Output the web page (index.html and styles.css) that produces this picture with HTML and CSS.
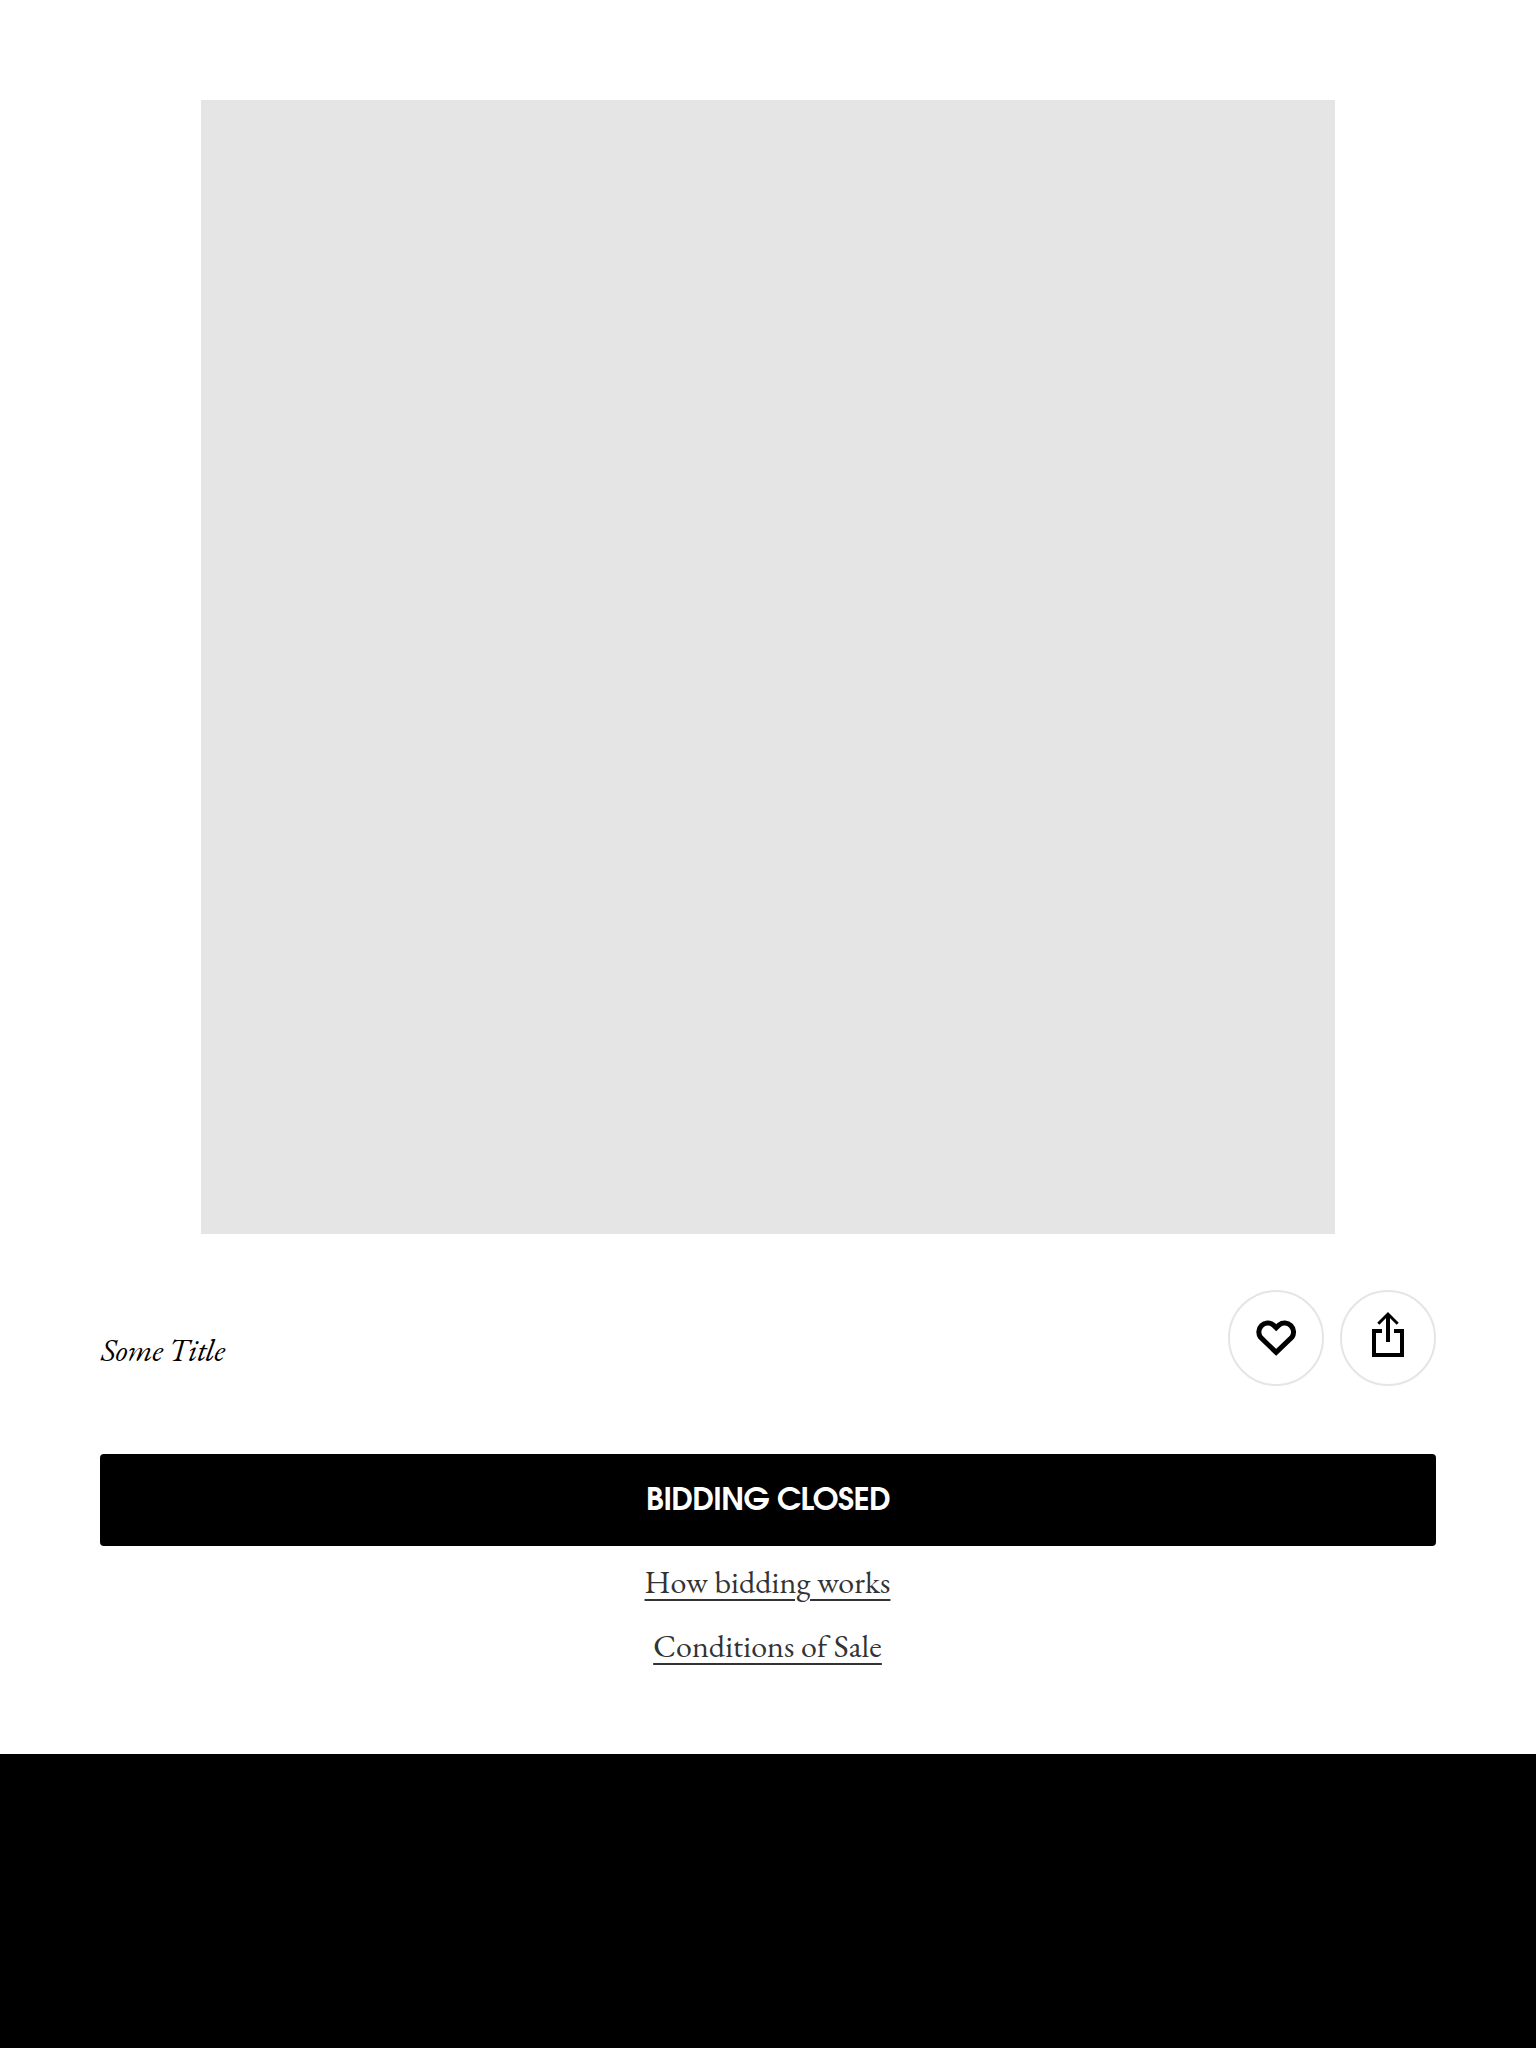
FILE: index.html
```html
<!DOCTYPE html>
<html lang="en">
<head>
<meta charset="utf-8">
<title>Some Title</title>
<link rel="stylesheet" href="styles.css">
</head>
<body>
<main class="lot">
  <div class="lot-image"></div>
  <div class="lot-header">
    <h1 class="lot-title">Some Title</h1>
    <div class="lot-actions">
      <button class="icon-button" aria-label="Save">
        <svg viewBox="2 2 92 92" fill="none" stroke="#000" stroke-width="5"><path d="M48.2 62.4 32.6 47.4A9 9 0 0 1 45.3 34.9L48.2 37.8 51.1 34.9A9 9 0 0 1 63.8 47.4Z"/></svg>
      </button>
      <button class="icon-button" aria-label="Share">
        <svg viewBox="2 2 92 92" fill="none" stroke="#000" stroke-width="4"><path d="M42 41H34V65H62V41H54M48 24V52"/><path stroke-width="3" d="M38.3 33.7 48 24 57.7 33.7"/></svg>
      </button>
    </div>
  </div>
  <button class="bid-button"><span class="bid-label">BIDDING CLOSED</span></button>
  <nav class="lot-links">
    <a class="lot-link" href="#">How bidding works</a>
    <a class="lot-link" href="#">Conditions of Sale</a>
  </nav>
</main>
</body>
</html>
```
FILE: styles.css
```css
* { box-sizing: border-box; }
html { background: #000; }
body { margin: 0; min-height: 2048px; background: #000; font-family: "EB Garamond", "Liberation Serif", serif; }
.lot { height: 1754px; padding: 100px 100px 0; background: #fff; display: flex; flex-direction: column; }
.lot-image { width: 1134px; height: 1134px; margin-left: 101px; flex-shrink: 0; background: #e5e5e5; }
.lot-header { display: flex; justify-content: space-between; align-items: flex-start; height: 96px; margin-top: 56px; }
.lot-title { margin: 41px 0 0 1px; font-size: 32px; line-height: 38px; font-weight: 400; font-style: italic; letter-spacing: -0.4px; color: #000; }
.lot-actions { display: flex; gap: 16px; }
.icon-button { width: 96px; height: 96px; padding: 0; border: 2px solid #e5e5e5; border-radius: 50%; background: #fff; }
.icon-button svg { display: block; width: 92px; height: 92px; }
.bid-button { display: flex; justify-content: center; align-items: center; height: 92px; flex-shrink: 0; margin-top: 68px; padding: 4px 0 0; border: 0; border-radius: 4px; background: #000; color: #fff; font-family: "URW Gothic", "TeX Gyre Adventor", "League Spartan", "Jost", "Lato", sans-serif; font-size: 31px; line-height: 40px; font-weight: 700; }
.bid-label { letter-spacing: -0.7px; }
.lot-links { display: flex; flex-direction: column; align-items: center; gap: 26px; padding: 17px 1px 0 0; }
.lot-link { color: #333; font-size: 32px; line-height: 38px; letter-spacing: 0.09px; text-decoration: underline; text-decoration-thickness: 2px; text-underline-offset: 6px; white-space: nowrap; }
```
